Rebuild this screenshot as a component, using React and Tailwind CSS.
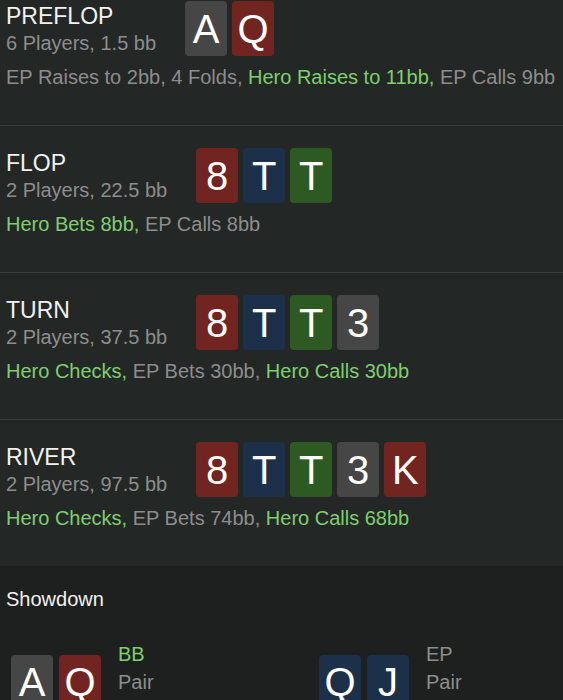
import React from "react";

const suitBg = {
  s: "bg-[#464646]",
  h: "bg-[#722420]",
  d: "bg-[#1c304a]",
  c: "bg-[#2c5a22]",
};

function Card({ rank, suit }) {
  return (
    <div
      className={`${suitBg[suit]} w-[42px] h-[55px] rounded-[4px] flex items-center justify-center text-[40px] leading-none text-white`}
    >
      {rank}
    </div>
  );
}

function Street({ title, sub, cards, actions, first, last }) {
  return (
    <div
      className={`px-[6px] pb-[36px] ${first ? "pt-[1px]" : "pt-[22px]"} ${
        last ? "" : "border-b border-[#393d3b]"
      }`}
    >
      <div className="flex items-start">
        <div className="pt-[2px]">
          <div className="text-[23px] leading-[26px] text-[#f2f2f2]">{title}</div>
          <div className="mt-[2px] text-[20px] leading-[24px] text-[#8d8d8d]">{sub}</div>
        </div>
        <div className="ml-[29px] flex gap-[5px]">
          {cards.map((c, i) => (
            <Card key={i} rank={c[0]} suit={c[1]} />
          ))}
        </div>
      </div>
      <div className="mt-[9px] text-[20px] leading-[24px] whitespace-nowrap">
        {actions.map((a, i) => (
          <span key={i} className={a.hero ? "text-[#7fcf6e]" : "text-[#8d8d8d]"}>
            {a.text}
            {i < actions.length - 1 ? ", " : ""}
          </span>
        ))}
      </div>
    </div>
  );
}

const streets = [
  {
    title: "PREFLOP",
    sub: "6 Players, 1.5 bb",
    cards: ["As", "Qh"],
    actions: [
      { text: "EP Raises to 2bb" },
      { text: "4 Folds" },
      { text: "Hero Raises to 11bb", hero: true },
      { text: "EP Calls 9bb" },
    ],
  },
  {
    title: "FLOP",
    sub: "2 Players, 22.5 bb",
    cards: ["8h", "Td", "Tc"],
    actions: [{ text: "Hero Bets 8bb", hero: true }, { text: "EP Calls 8bb" }],
  },
  {
    title: "TURN",
    sub: "2 Players, 37.5 bb",
    cards: ["8h", "Td", "Tc", "3s"],
    actions: [
      { text: "Hero Checks", hero: true },
      { text: "EP Bets 30bb" },
      { text: "Hero Calls 30bb", hero: true },
    ],
  },
  {
    title: "RIVER",
    sub: "2 Players, 97.5 bb",
    cards: ["8h", "Td", "Tc", "3s", "Kh"],
    actions: [
      { text: "Hero Checks", hero: true },
      { text: "EP Bets 74bb" },
      { text: "Hero Calls 68bb", hero: true },
    ],
  },
];

function Player({ cards, name, hand, hero }) {
  return (
    <div className="flex items-center">
      <div className="flex gap-[6px]">
        {cards.map((c, i) => (
          <Card key={i} rank={c[0]} suit={c[1]} />
        ))}
      </div>
      <div className="ml-[17px] h-[84px] text-[20px] leading-[28px]">
        <div className={hero ? "text-[#7fcf6e]" : "text-[#8d8d8d]"}>{name}</div>
        <div className="text-[#8d8d8d]">{hand}</div>
      </div>
    </div>
  );
}

export default function App() {
  return (
    <div className="w-full h-[700px] overflow-hidden bg-[#232725] font-['Liberation_Sans',Arial,sans-serif]">
      {streets.map((s, i) => (
        <Street key={s.title} {...s} first={i === 0} last={i === streets.length - 1} />
      ))}
      <div className="bg-[#1d201e] pt-[19px] pb-6 min-h-[200px]">
        <div className="px-[6px] text-[20px] leading-[28px] text-[#f2f2f2]">Showdown</div>
        <div className="mt-[27px] pl-[11px] grid grid-cols-[308px_1fr]">
          <Player cards={["As", "Qh"]} name="BB" hand="Pair" hero />
          <Player cards={["Qd", "Jd"]} name="EP" hand="Pair" />
        </div>
      </div>
    </div>
  );
}
